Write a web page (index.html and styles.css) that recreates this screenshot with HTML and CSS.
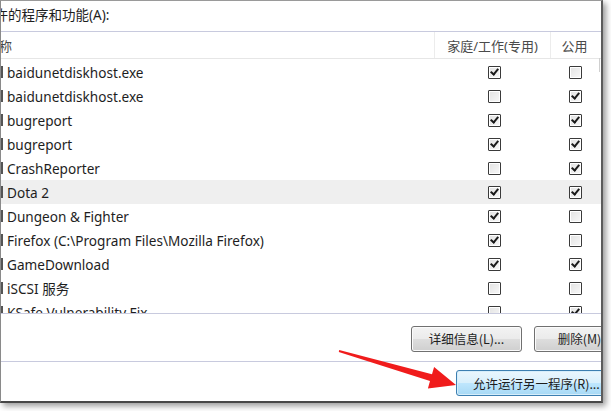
FILE: index.html
```html
<!DOCTYPE html>
<html lang="zh-CN">
<head>
<meta charset="utf-8">
<title>允许的程序和功能</title>
<link rel="stylesheet" href="styles.css">
</head>
<body>
<div class="window">
  <div class="title"><span class="title-text">允许的程序和功能(A):</span></div>
  <div class="list">
    <div class="row head">
      <div class="cell name"><span class="head-name">名称</span></div>
      <div class="cell c1 sep">家庭/工作(专用)</div>
      <div class="cell c2 sep">公用</div>
    </div>
    <div class="row">
      <div class="cell name"><span class="lead"></span>baidunetdiskhost.exe</div>
      <div class="cell c1"><span class="cb on"></span></div>
      <div class="cell c2"><span class="cb"></span></div>
    </div>
    <div class="row">
      <div class="cell name"><span class="lead"></span>baidunetdiskhost.exe</div>
      <div class="cell c1"><span class="cb"></span></div>
      <div class="cell c2"><span class="cb on"></span></div>
    </div>
    <div class="row">
      <div class="cell name"><span class="lead"></span>bugreport</div>
      <div class="cell c1"><span class="cb on"></span></div>
      <div class="cell c2"><span class="cb on"></span></div>
    </div>
    <div class="row">
      <div class="cell name"><span class="lead"></span>bugreport</div>
      <div class="cell c1"><span class="cb on"></span></div>
      <div class="cell c2"><span class="cb on"></span></div>
    </div>
    <div class="row">
      <div class="cell name"><span class="lead"></span>CrashReporter</div>
      <div class="cell c1"><span class="cb"></span></div>
      <div class="cell c2"><span class="cb on"></span></div>
    </div>
    <div class="row hover">
      <div class="cell name"><span class="lead"></span>Dota 2</div>
      <div class="cell c1"><span class="cb on"></span></div>
      <div class="cell c2"><span class="cb on"></span></div>
    </div>
    <div class="row">
      <div class="cell name"><span class="lead"></span>Dungeon &amp; Fighter</div>
      <div class="cell c1"><span class="cb on"></span></div>
      <div class="cell c2"><span class="cb"></span></div>
    </div>
    <div class="row">
      <div class="cell name"><span class="lead"></span>Firefox (C:\Program Files\Mozilla Firefox)</div>
      <div class="cell c1"><span class="cb on"></span></div>
      <div class="cell c2"><span class="cb"></span></div>
    </div>
    <div class="row">
      <div class="cell name"><span class="lead"></span>GameDownload</div>
      <div class="cell c1"><span class="cb on"></span></div>
      <div class="cell c2"><span class="cb on"></span></div>
    </div>
    <div class="row">
      <div class="cell name"><span class="lead"></span>iSCSI 服务</div>
      <div class="cell c1"><span class="cb"></span></div>
      <div class="cell c2"><span class="cb"></span></div>
    </div>
    <div class="row">
      <div class="cell name"><span class="lead"></span>KSafe Vulnerability Fix</div>
      <div class="cell c1"><span class="cb"></span></div>
      <div class="cell c2"><span class="cb on"></span></div>
    </div>
    <div class="scroll-hint"></div>
  </div>
  <div class="actions">
    <button class="btn details">详细信息(L)...</button>
    <button class="btn remove">删除(M)</button>
  </div>
  <div class="footer">
    <button class="btn primary">允许运行另一程序(R)...</button>
  </div>
  <svg class="arrow" width="600" height="400" viewBox="0 0 600 400">
    <polygon fill="#f01c1c" points="338.2,348.9 431.0,373.3 433.1,366.0 455,384 426.9,387.5 429.0,380.1 337.8,351.1"/>
  </svg>
</div>
</body>
</html>
```
FILE: styles.css
```css
html, body {
  margin: 0;
  padding: 0;
}
body {
  width: 611px;
  height: 411px;
  overflow: hidden;
  background: #ffffff;
  font-family: "Noto Sans", "Noto Sans CJK SC", sans-serif;
  color: #1e1e1e;
}
.window {
  position: relative;
  box-sizing: border-box;
  width: 603px;
  height: 403px;
  background: #ffffff;
  border-top: 1px solid #9a9a9a;
  border-left: 1px solid #8a8a8a;
  border-right: 2px solid #5c5c5c;
  border-bottom: 2px solid #474747;
  box-shadow: 3px 3px 6px rgba(0, 0, 0, 0.4);
  overflow: hidden;
  display: flex;
  flex-direction: column;
}
.title {
  height: 30px;
  display: flex;
  align-items: center;
  font-size: 13.5px;
  white-space: nowrap;
}
.title-text {
  margin-left: -20px;
  margin-top: -4px;
}
.list {
  position: relative;
  height: 281px;
  border-top: 1px solid #c8cade;
  border-bottom: 1px solid #c8cade;
  overflow: hidden;
}
.row {
  display: grid;
  grid-template-columns: 433px 116px 48px;
  height: 24px;
  align-items: center;
  font-size: 13.6px;
  white-space: nowrap;
}
.row.head {
  height: 26px;
  border-bottom: 1px solid #e6e6e6;
  color: #4a4a4a;
  font-size: 13px;
  margin-bottom: 1px;
}
.row.hover {
  background: #efefef;
}
.cell {
  display: flex;
  align-items: center;
  height: 100%;
}
.name {
  padding-left: 6px;
  overflow: hidden;
}
.head-name {
  margin-left: -21px;
}
.lead {
  box-sizing: border-box;
  width: 12px;
  height: 12px;
  margin-left: -16px;
  margin-right: 4px;
  border: 2px solid #555;
  flex: none;
}
.c1, .c2 {
  justify-content: center;
}
.sep {
  border-left: 1px solid #ececec;
}
.c1.sep {
  padding-left: 0;
}
.cb {
  position: relative;
  box-sizing: border-box;
  width: 13px;
  height: 13px;
  border: 1px solid #3a3a3a;
  border-radius: 1px;
  background: linear-gradient(135deg, #e2e2e2, #f8f8f8);
  box-shadow: inset 0 0 0 1px #ffffff;
}
.c1 .cb {
  margin-left: 4px;
}
.c2 .cb {
  margin-left: 3px;
}
.cb.on::after {
  content: "";
  position: absolute;
  left: 3px;
  top: 0px;
  width: 3px;
  height: 6px;
  border-right: 2px solid #1a1a1a;
  border-bottom: 2px solid #1a1a1a;
  transform: rotate(40deg);
}
.scroll-hint {
  position: absolute;
  right: 1px;
  top: 26px;
  width: 1px;
  height: 14px;
  background: #cfcfcf;
}
.actions {
  height: 48px;
  display: flex;
  align-items: center;
  justify-content: flex-end;
  gap: 12px;
  margin-right: -24px;
  border-bottom: 1px solid #c8cade;
  padding-top: 2px;
  box-sizing: border-box;
}
.footer {
  flex: 1;
  display: flex;
  align-items: center;
  justify-content: flex-end;
  margin-right: -20px;
  padding-top: 3px;
}
.btn {
  box-sizing: border-box;
  height: 26px;
  font-family: "Noto Sans CJK SC", "Noto Sans", sans-serif;
  font-size: 12.5px;
  color: #1e1e1e;
  border: 1px solid #707070;
  border-radius: 3px;
  background: linear-gradient(#f3f3f3 0%, #ebebeb 48%, #dddddd 52%, #cfcfcf 100%);
  box-shadow: inset 0 0 0 1px #fbfbfb;
  padding: 0;
}
.details {
  width: 111px;
}
.remove {
  width: 91px;
}
.primary {
  width: 165px;
  height: 26px;
  border-color: #3c7fb1;
  background: linear-gradient(#eaf6fd 0%, #d9f0fc 48%, #bee6fd 52%, #a7d9f5 100%);
  box-shadow: inset 0 0 0 1px #d6eefb;
  text-align: left;
  padding-left: 16px;
}
.arrow {
  position: absolute;
  left: 0;
  top: 0;
  pointer-events: none;
}
```
